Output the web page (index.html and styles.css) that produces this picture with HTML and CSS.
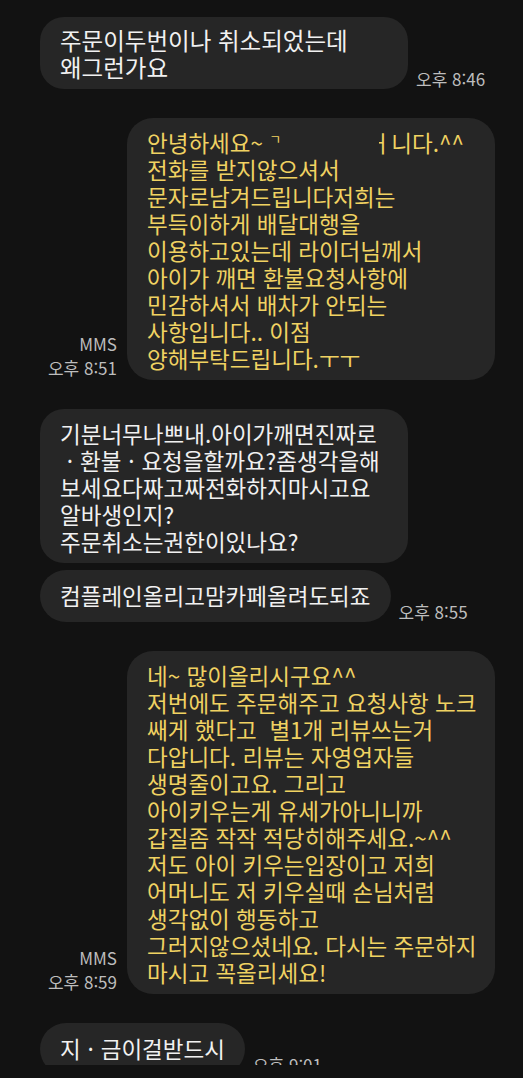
FILE: index.html
```html
<!DOCTYPE html>
<html lang="ko">
<head>
<meta charset="utf-8">
<title>메시지</title>
<link rel="stylesheet" href="styles.css">
</head>
<body>
<div class="chat">
  <div class="row in">
    <div class="bubble recv wide big">주문이두번이나 취소되었는데<br>왜그런가요</div>
    <div class="time">오후 8:46</div>
  </div>

  <div class="row out">
    <div class="meta"><div>MMS</div><div>오후 8:51</div></div>
    <div class="bubble sent">안녕하세요~ <span class="frag">ㄱ</span><span class="gap"></span><span class="cut"><span>ㅓ</span></span>니다.^^<br>전화를 받지않으셔서<br>문자로남겨드립니다저희는<br>부득이하게 배달대행을<br>이용하고있는데 라이더님께서<br>아이가 깨면 환불요청사항에<br>민감하셔서 배차가 안되는<br>사항입니다.. 이점<br>양해부탁드립니다.ㅜㅜ</div>
  </div>

  <div class="row in">
    <div class="bubble recv wide">기분너무나쁘내.아이가깨면진짜로<br><span class="dot">·</span>환불<span class="dot">·</span>요청을할까요?좀생각을해<br>보세요다짜고짜전화하지마시고요<br>알바생인지?<br>주문취소는권한이있나요?</div>
  </div>
  <div class="row in cont">
    <div class="bubble recv single">컴플레인올리고맘카페올려도되죠</div>
    <div class="time">오후 8:55</div>
  </div>

  <div class="row out">
    <div class="meta"><div>MMS</div><div>오후 8:59</div></div>
    <div class="bubble sent">네~ 많이올리시구요^^<br>저번에도 주문해주고 요청사항 노크<br>쌔게 했다고&nbsp; 별1개 리뷰쓰는거<br>다압니다. 리뷰는 자영업자들<br>생명줄이고요. 그리고<br>아이키우는게 유세가아니니까<br>갑질좀 작작 적당히해주세요.~^^<br>저도 아이 키우는입장이고 저희<br>어머니도 저 키우실때 손님처럼<br>생각없이 행동하고<br>그러지않으셨네요. 다시는 주문하지<br>마시고 꼭올리세요!</div>
  </div>

  <div class="row in">
    <div class="bubble recv single">지<span class="dot">·</span>금이걸받드시</div>
    <div class="time">오후 9:01</div>
  </div>
</div>
</body>
</html>
```

FILE: styles.css
```css
* {
  box-sizing: border-box;
}

html, body {
  margin: 0;
  padding: 0;
  background: #121212;
}

body {
  width: 523px;
  height: 1078px;
  overflow: hidden;
  font-family: "Noto Sans CJK KR", "Noto Sans", sans-serif;
}

.chat {
  height: 1065px;
  overflow: hidden;
  padding-top: 17px;
  display: flex;
  flex-direction: column;
}

.row {
  display: flex;
  align-items: flex-end;
  flex-shrink: 0;
}

.row + .row {
  margin-top: 29px;
}

.row.cont {
  margin-top: 7px;
}

.row.in {
  padding-left: 40px;
}

.row.out {
  justify-content: flex-end;
  padding-right: 28px;
}

.bubble {
  background: #262626;
  border-radius: 24px;
  font-size: 22.5px;
  line-height: 27px;
  padding: 11px 20px 8px;
  white-space: nowrap;
  flex-shrink: 0;
}

.bubble.big {
  font-size: 23.5px;
  padding: 10px 20px 8px;
}

.bubble.single {
  padding: 12px 20px 13px;
  border-radius: 26px;
}

.bubble.recv {
  color: #f1f1f1;
}

.bubble.wide {
  width: 368px;
}

.bubble.sent {
  width: 368px;
  color: #f0d262;
  border-radius: 26px;
}

.time {
  margin-left: 8px;
  font-size: 17px;
  line-height: 20px;
  color: #bdbdbd;
  white-space: nowrap;
}

.meta {
  margin-right: 10px;
  text-align: right;
  font-size: 17px;
  line-height: 24px;
  color: #bdbdbd;
  white-space: nowrap;
}

.dot {
  display: inline-block;
  width: 20px;
  text-align: center;
}

.frag {
  display: inline-block;
  font-size: 13px;
  line-height: 13px;
  vertical-align: 8px;
}

.gap {
  display: inline-block;
  width: 98px;
}

.cut {
  display: inline-flex;
  justify-content: flex-end;
  width: 12px;
  overflow: hidden;
  vertical-align: bottom;
}
```
